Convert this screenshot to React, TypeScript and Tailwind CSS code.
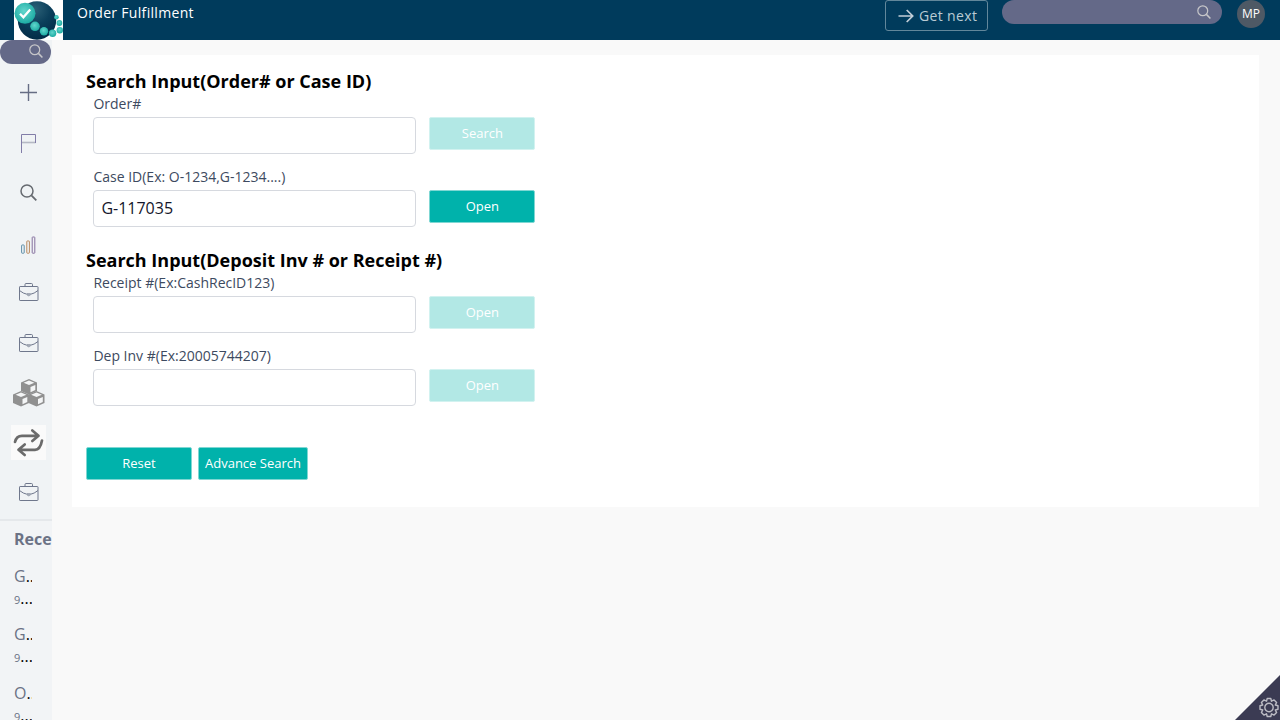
import type { ReactNode } from 'react';

function SearchIcon({ className, color }: { className: string; color: string }) {
  return (
    <svg className={className} viewBox="0 0 17 17" fill="none" stroke={color} strokeWidth="1.5">
      <circle cx="7" cy="7" r="6" />
      <path d="M11.4 11.4L16.3 16.3" strokeWidth="1.8" />
    </svg>
  );
}

function Logo() {
  return (
    <svg className="block h-10 w-[49px] shrink-0" viewBox="0 0 49 40">
      <defs>
        <radialGradient id="globe" cx="0.45" cy="0.2" r="0.8">
          <stop offset="0" stopColor="#2b6076" />
          <stop offset="0.5" stopColor="#0b3f5b" />
          <stop offset="1" stopColor="#032c47" />
        </radialGradient>
        <radialGradient id="bead" cx="0.45" cy="0.4" r="0.65">
          <stop offset="0" stopColor="#62d6cd" />
          <stop offset="1" stopColor="#17a89f" />
        </radialGradient>
      </defs>
      <rect width="49" height="40" fill="#ffffff" />
      <circle cx="23" cy="20.5" r="19.2" fill="url(#globe)" />
      <circle cx="11" cy="13.3" r="10.5" fill="url(#bead)" />
      <path d="M6 13.7l3.4 3.5 6.8-7.8" fill="none" stroke="#ffffff" strokeWidth="2.3" />
      <circle cx="21" cy="26.3" r="4.8" fill="url(#bead)" />
      <circle cx="30" cy="31.3" r="4.2" fill="url(#bead)" />
      <circle cx="38.6" cy="33.2" r="3.7" fill="url(#bead)" />
      <circle cx="45.8" cy="30.3" r="3.2" fill="url(#bead)" />
      <circle cx="45.4" cy="23" r="2.9" fill="url(#bead)" />
      <circle cx="42.4" cy="17.3" r="2.3" fill="url(#bead)" />
    </svg>
  );
}

function Briefcase() {
  return (
    <svg className="h-[19px] w-5" viewBox="0 0 20 19" fill="none" stroke="#6f778c" strokeWidth="1">
      <rect x="0.5" y="4.5" width="18.5" height="14" rx="0.6" />
      <path d="M6 4.5V2.6Q6 1.5 7 1.5H12.5Q13.5 1.5 13.5 2.6V4.5" />
      <path d="M0.5 8.5Q4.5 11.7 7.8 12.2M19 8.5Q15 11.7 11.7 12.2" />
      <path d="M8 11.5H11.5V13L9.8 14L8 13Z" fill="#a3a9b5" stroke="#8c93a3" strokeWidth="0.6" />
    </svg>
  );
}

function Cube({ x, y }: { x: number; y: number }) {
  return (
    <g transform={`translate(${x} ${y})`}>
      <path d="M8 0L16 3.4V12L8 15.6L0 12V3.4Z" fill="#909090" />
      <path d="M8 1.6L13.4 3.8L8 6.1L2.6 3.8Z" fill="#f4f5f6" />
      <path d="M9.5 8.1L14.3 6V11L9.5 13.2Z" fill="#f4f5f6" />
    </g>
  );
}

function NavItem({ children }: { children: ReactNode }) {
  return <div className="flex h-[50px] w-[57px] shrink-0 items-center justify-center">{children}</div>;
}

function Recent({ name, count }: { name: string; count: string }) {
  return (
    <div className="h-[58.3px] w-[18px] shrink-0 whitespace-nowrap text-black">
      <div className="h-[25px] overflow-hidden text-[16px] leading-[25px]">
        <span className="text-[#6b7285]">{name}</span>..
      </div>
      <div className="h-[22px] overflow-hidden text-[16px] leading-[18px]">
        <span className="text-[11px] text-[#6b7285]">{count}</span>...
      </div>
    </div>
  );
}

function Sidebar() {
  return (
    <aside className="flex w-[52px] shrink-0 flex-col overflow-hidden bg-[#f0f3f5]">
      <div className="flex h-6 w-[51px] shrink-0 items-start justify-end rounded-full bg-[#646988] pt-1 pr-2">
        <SearchIcon className="h-[14px] w-[14px]" color="#c6c6c9" />
      </div>
      <nav className="mt-1 flex flex-col">
        <NavItem>
          <svg className="mb-[2px] h-[17px] w-[17px]" viewBox="0 0 17 17" stroke="#666d84" strokeWidth="1.4">
            <path d="M8.5 0V17M0 8.5H17" />
          </svg>
        </NavItem>
        <NavItem>
          <svg className="h-5 w-[15px]" viewBox="0 0 15 20" fill="none" strokeWidth="1">
            <path d="M0.5 9.5H14.5" stroke="#b5b9c4" strokeWidth="1.6" />
            <path d="M0.5 20V1.5H14.5V10" stroke="#827da8" />
          </svg>
        </NavItem>
        <NavItem><SearchIcon className="mb-[2px] h-[17px] w-[17px]" color="#666a70" /></NavItem>
        <NavItem>
          <svg className="mt-[3px] h-[18px] w-[15px]" viewBox="0 0 15 18" fill="none">
            <rect x="0.6" y="9" width="2.6" height="8.2" rx="0.5" stroke="#5f8fa8" />
            <rect x="5.8" y="5" width="2.6" height="12.2" rx="0.5" stroke="#b8895f" />
            <rect x="11.2" y="1" width="2.6" height="16.2" rx="0.5" stroke="#85709f" />
          </svg>
        </NavItem>
        <NavItem><div className="pb-[3px]"><Briefcase /></div></NavItem>
        <NavItem><div className="pb-px"><Briefcase /></div></NavItem>
        <NavItem>
          <svg className="h-[30px] w-8" viewBox="0 0 32 30">
            <Cube x={8} y={1} />
            <Cube x={0} y={13} />
            <Cube x={15.5} y={13} />
          </svg>
        </NavItem>
        <NavItem>
          <div className="mb-px flex h-[35px] w-[35px] items-center justify-center bg-[#fafafa]">
            <svg className="h-[29px] w-[31px]" viewBox="0 0 31 29" fill="none" stroke="#6b6b6b" strokeWidth="2.7" strokeLinecap="round" strokeLinejoin="round">
              <path d="M2 14C3 9.5 5 7.8 9 7.8H25M19.3 2.5L25.5 7.8L19.3 13" />
              <path d="M29 12.5C28 18 26 21.8 22 21.8H6M11.7 16.5L5.5 21.8L11.7 27" />
            </svg>
          </div>
        </NavItem>
        <NavItem><div className="pb-[3px]"><Briefcase /></div></NavItem>
      </nav>
      <div className="mt-px flex grow flex-col border-t-2 border-[#e5e8eb] bg-[#f2f4f6] pl-[14px]">
        <h2 className="h-[43px] shrink-0 text-[16px] leading-[36px] font-bold text-[#6b7285]">Recents</h2>
        <Recent name="G" count="9" />
        <Recent name="G" count="9" />
        <Recent name="O" count="9" />
      </div>
    </aside>
  );
}

function ActionButton({ label, disabled = false }: { label: string; disabled?: boolean }) {
  return (
    <button
      disabled={disabled}
      className="h-[33px] min-w-[106px] rounded-[2px] border border-[#7fd7d3] bg-[#00b2ab] px-[6px] pb-px text-[13px] leading-none text-white disabled:border-[#d2f2f0] disabled:bg-[#b2e8e5]"
    >
      {label}
    </button>
  );
}

function Field({ label, value = '', action, disabled = false }: { label: string; value?: string; action: string; disabled?: boolean }) {
  return (
    <div className="flex h-[73px] items-start gap-[13px] pl-[7.4px]">
      <label className="block text-[14px] leading-[21px] text-[#3d4a60]">
        {label}
        <input
          defaultValue={value}
          className="mt-[3px] block h-[37px] w-[323px] rounded-[4px] border border-[#d6d9df] bg-white px-[7px] pb-px text-[16px] text-[#14162b] outline-none"
        />
      </label>
      <div className="pt-6">
        <ActionButton label={action} disabled={disabled} />
      </div>
    </div>
  );
}

function Header() {
  return (
    <header className="flex h-10 shrink-0 items-start bg-[#003b5c] pl-[14px]">
      <Logo />
      <h1 className="ml-[14px] grow text-[14px] leading-[26px] tracking-[0.32px] text-white">Order Fulfillment</h1>
      <button className="flex h-[31px] w-[103px] items-center rounded-[3px] border border-[#62879b] pl-[12px] text-[14px] tracking-[0.35px] text-[#bacbd4]">
        <svg className="mr-[5px] h-4 w-4 shrink-0" viewBox="0 0 16 16" fill="none" stroke="#c2ced8" strokeWidth="1.7">
          <path d="M0.5 8H14.5M8.7 2L14.7 8L8.7 14" />
        </svg>
        Get next
      </button>
      <div className="ml-[14px] flex h-6 w-[220px] items-start justify-end rounded-full bg-[#646988] pt-[5px] pr-[11px]">
        <SearchIcon className="h-[14px] w-[14px]" color="#c6c6c9" />
      </div>
      <div className="mr-[15px] ml-[15px] flex h-7 w-7 items-center justify-center rounded-full bg-[#4e5965] text-[12px] font-medium text-white">MP</div>
    </header>
  );
}

export default function App() {
  return (
    <div className="relative flex h-[720px] w-[1280px] flex-col overflow-hidden bg-[#f9f9f9] font-['Open_Sans',sans-serif]">
      <Header />
      <div className="flex min-h-0 grow">
        <Sidebar />
        <main className="mt-[15px] ml-5 h-[452px] w-[1187px] bg-white pt-[13px] pl-[14px]">
          <h2 className="h-[25px] text-[18px] leading-[27px] font-bold text-black">Search Input(Order# or Case ID)</h2>
          <Field label="Order#" action="Search" disabled />
          <Field label="Case ID(Ex: O-1234,G-1234....)" value="G-117035" action="Open" />
          <h2 className="mt-2 h-[25px] text-[18px] leading-[27px] font-bold text-black">Search Input(Deposit Inv # or Receipt #)</h2>
          <Field label="Receipt #(Ex:CashRecID123)" action="Open" disabled />
          <Field label="Dep Inv #(Ex:20005744207)" action="Open" disabled />
          <div className="mt-[29px] flex gap-[6px]">
            <ActionButton label="Reset" />
            <ActionButton label="Advance Search" />
          </div>
        </main>
      </div>
      <div className="absolute right-0 bottom-0">
        <svg className="block h-[45px] w-[45px]" viewBox="0 0 45 45">
          <path d="M45 0V45H0Z" fill="#3b3b53" />
          <g transform="translate(34 32.5)" fill="none" stroke="#bcbcc4" strokeWidth="1.4" strokeLinejoin="round">
            <circle r="4.2" />
            <path d="M-1.8-9H1.8L2.5-6.3L5.1-7.6L7.6-5.1L6.3-2.5L9-1.8V1.8L6.3 2.5L7.6 5.1L5.1 7.6L2.5 6.3L1.8 9H-1.8L-2.5 6.3L-5.1 7.6L-7.6 5.1L-6.3 2.5L-9 1.8V-1.8L-6.3-2.5L-7.6-5.1L-5.1-7.6L-2.5-6.3Z" />
          </g>
        </svg>
      </div>
    </div>
  );
}
